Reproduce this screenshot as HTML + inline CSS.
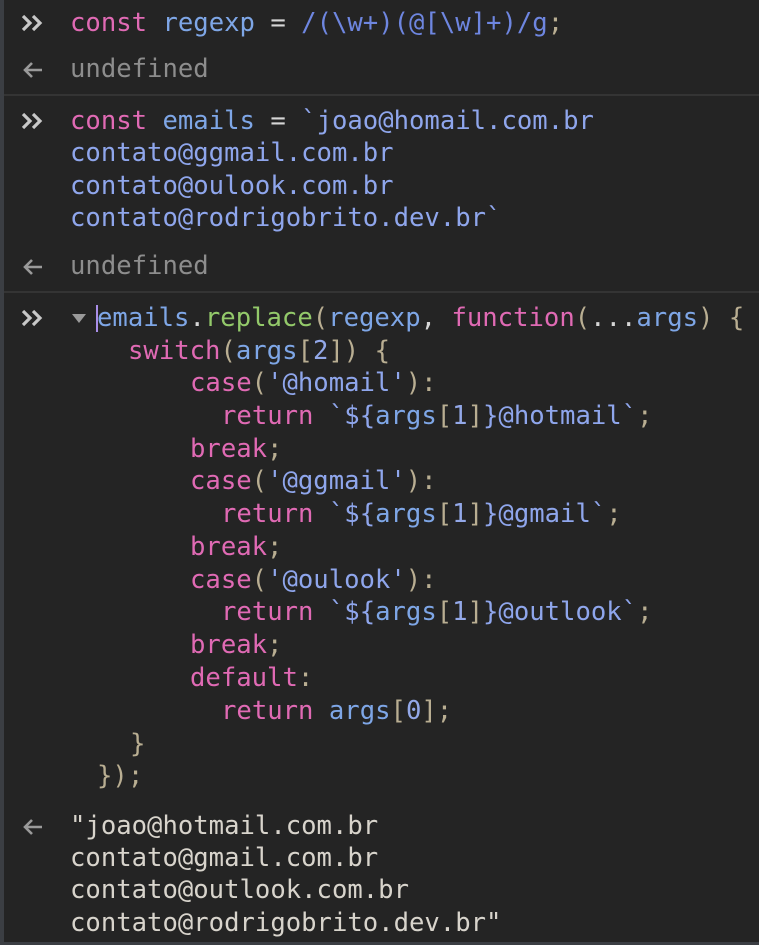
<!DOCTYPE html>
<html><head><meta charset="utf-8"><style>
html,body{margin:0;padding:0;background:#242424;}
body{width:759px;height:945px;position:relative;overflow:hidden;font-family:"DejaVu Sans Mono","Liberation Mono",monospace;font-size:25.6px;}
.lb{position:absolute;left:0;top:0;width:4px;height:945px;background:#3b3e43;}
.bb{position:absolute;left:0;bottom:0;width:759px;height:3px;background:#3b3e43;}
.sep{position:absolute;left:4px;width:755px;height:2px;background:#343434;}
.l{position:absolute;left:70px;height:33px;line-height:33px;white-space:pre;color:#d6d6d6;}
svg.ic{position:absolute;left:20px;width:28px;height:20px;}
.k{color:#e06ab4}.v{color:#7ea6e6}.s{color:#8fa6ec}.r{color:#6e86e0}.f{color:#93c96a}.p{color:#b9ae92}.n{color:#93a8e8}.u{color:#8d8d8d}.o{color:#d8d4cc}
</style></head><body>
<div class="lb"></div><div class="bb"></div>
<div class="sep" style="top:94px"></div>
<div class="sep" style="top:291px"></div>

<svg style="display:none"><defs>
<g id="chev"><path d="M3 3 L10 10 L3 17 M13 3 L20 10 L13 17" fill="none" stroke="#c8c8c8" stroke-width="3.2"/></g>
<g id="arr"><path d="M22 10 H5 M12 3 L5 10 L12 17" fill="none" stroke="#9a9a9a" stroke-width="2.6"/></g>
</defs></svg>

<svg class="ic" style="top:13px" viewBox="0 0 28 20"><use href="#chev"/></svg>
<div class="l" style="top:7px"><span class="k">const</span> <span class="v">regexp</span> = <span class="r">/(\w+)(@[\w]+)/g</span><span class="p">;</span></div>
<svg class="ic" style="top:60px" viewBox="0 0 28 20"><use href="#arr"/></svg>
<div class="l u" style="top:53px">undefined</div>

<svg class="ic" style="top:111px" viewBox="0 0 28 20"><use href="#chev"/></svg>
<div class="l" style="top:105px"><span class="k">const</span> <span class="v">emails</span> = <span class="s">`joao@homail.com.br</span></div>
<div class="l s" style="top:137px">contato@ggmail.com.br</div>
<div class="l s" style="top:170px">contato@oulook.com.br</div>
<div class="l s" style="top:202px">contato@rodrigobrito.dev.br`</div>
<svg class="ic" style="top:257px" viewBox="0 0 28 20"><use href="#arr"/></svg>
<div class="l u" style="top:250px">undefined</div>

<svg class="ic" style="top:308px" viewBox="0 0 28 20"><use href="#chev"/></svg>
<div style="position:absolute;left:72px;top:314px;width:0;height:0;border-left:7px solid transparent;border-right:7px solid transparent;border-top:9px solid #9a9a9a"></div>
<div style="position:absolute;left:96px;top:305px;width:2px;height:27px;background:#a98ee8"></div>
<div class="l" style="left:97px;top:302px"><span class="v">emails</span>.<span class="f">replace</span><span class="p">(</span><span class="v">regexp</span>, <span class="k">function</span><span class="p">(</span>...<span class="v">args</span><span class="p">)</span> <span class="p">{</span></div>
<div class="l" style="left:128px;top:335px"><span class="k">switch</span><span class="p">(</span><span class="v">args</span><span class="p">[</span><span class="n">2</span><span class="p">])</span> <span class="p">{</span></div>
<div class="l" style="left:190px;top:367px"><span class="k">case</span><span class="p">(</span><span class="s">'@homail'</span><span class="p">):</span></div>
<div class="l" style="left:221px;top:400px"><span class="k">return</span> <span class="s">`${</span><span class="v">args</span><span class="p">[</span><span class="n">1</span><span class="p">]</span><span class="s">}@hotmail`</span><span class="p">;</span></div>
<div class="l" style="left:190px;top:433px"><span class="k">break</span><span class="p">;</span></div>
<div class="l" style="left:190px;top:465px"><span class="k">case</span><span class="p">(</span><span class="s">'@ggmail'</span><span class="p">):</span></div>
<div class="l" style="left:221px;top:498px"><span class="k">return</span> <span class="s">`${</span><span class="v">args</span><span class="p">[</span><span class="n">1</span><span class="p">]</span><span class="s">}@gmail`</span><span class="p">;</span></div>
<div class="l" style="left:190px;top:531px"><span class="k">break</span><span class="p">;</span></div>
<div class="l" style="left:190px;top:564px"><span class="k">case</span><span class="p">(</span><span class="s">'@oulook'</span><span class="p">):</span></div>
<div class="l" style="left:221px;top:596px"><span class="k">return</span> <span class="s">`${</span><span class="v">args</span><span class="p">[</span><span class="n">1</span><span class="p">]</span><span class="s">}@outlook`</span><span class="p">;</span></div>
<div class="l" style="left:190px;top:629px"><span class="k">break</span><span class="p">;</span></div>
<div class="l" style="left:190px;top:662px"><span class="k">default</span><span class="p">:</span></div>
<div class="l" style="left:221px;top:695px"><span class="k">return</span> <span class="v">args</span><span class="p">[</span><span class="n">0</span><span class="p">];</span></div>
<div class="l" style="left:130px;top:728px"><span class="p">}</span></div>
<div class="l" style="left:97px;top:760px"><span class="p">});</span></div>

<svg class="ic" style="top:817px" viewBox="0 0 28 20"><use href="#arr"/></svg>
<div class="l o" style="top:810px">"joao@hotmail.com.br</div>
<div class="l o" style="top:842px">contato@gmail.com.br</div>
<div class="l o" style="top:874px">contato@outlook.com.br</div>
<div class="l o" style="top:907px">contato@rodrigobrito.dev.br"</div>
</body></html>
